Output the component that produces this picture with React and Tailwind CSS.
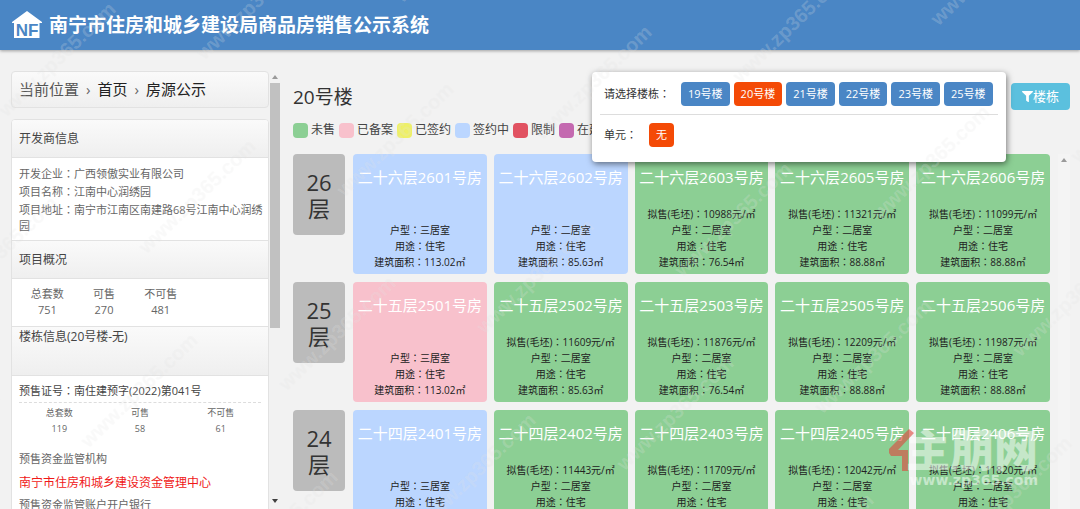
import React from "react";
import { FaFilter } from "react-icons/fa";

const LEGEND = [
  ["未售", "bg-[#8ccf94]"],
  ["已备案", "bg-[#f8c1cc]"],
  ["已签约", "bg-[#eef067]"],
  ["签约中", "bg-[#bbd6ff]"],
  ["限制", "bg-[#e15261]"],
  ["在建工程", "bg-[#c469b0]"],
];

const STATUS = {
  free: "bg-[#8ccf94]",
  signing: "bg-[#bbd6ff]",
  filed: "bg-[#f8c1cc]",
};

const FLOORS = [
  {
    floor: 26,
    name: "二十六层",
    rooms: [
      { no: "2601", status: "signing", type: "三居室", area: "113.02" },
      { no: "2602", status: "signing", type: "二居室", area: "85.63" },
      { no: "2603", status: "free", price: 10988, type: "二居室", area: "76.54" },
      { no: "2605", status: "free", price: 11321, type: "二居室", area: "88.88" },
      { no: "2606", status: "free", price: 11099, type: "二居室", area: "88.88" },
    ],
  },
  {
    floor: 25,
    name: "二十五层",
    rooms: [
      { no: "2501", status: "filed", type: "三居室", area: "113.02" },
      { no: "2502", status: "free", price: 11609, type: "二居室", area: "85.63" },
      { no: "2503", status: "free", price: 11876, type: "二居室", area: "76.54" },
      { no: "2505", status: "free", price: 12209, type: "二居室", area: "88.88" },
      { no: "2506", status: "free", price: 11987, type: "二居室", area: "88.88" },
    ],
  },
  {
    floor: 24,
    name: "二十四层",
    rooms: [
      { no: "2401", status: "signing", type: "三居室", area: "113.02" },
      { no: "2402", status: "free", price: 11443, type: "二居室", area: "85.63" },
      { no: "2403", status: "free", price: 11709, type: "二居室", area: "76.54" },
      { no: "2405", status: "free", price: 12042, type: "二居室", area: "88.88" },
      { no: "2406", status: "free", price: 11820, type: "二居室", area: "88.88" },
    ],
  },
];

const BUILDINGS = ["19号楼", "20号楼", "21号楼", "22号楼", "23号楼", "25号楼"];

// Full-width colon set in the middle of its cell.
function Colon() {
  return (
    <span lang="zh-TW" className="font-['Noto_Sans_CJK_TC',sans-serif] leading-none">：</span>
  );
}

function Logo() {
  return (
    <svg viewBox="0 0 32 28" className="h-7 w-8 shrink-0" role="img" aria-label="NF">
      <path d="M16 0 L31 11 V12 H28.500 V27 H3 V12 H1 V11 Z" fill="#fff" />
      <text x="16" y="24.500" textAnchor="middle" fontFamily="Liberation Sans, sans-serif" fontWeight="700" fontSize="17" fill="#4a86c5">
        NF
      </text>
    </svg>
  );
}

function Arrow({ down }) {
  return (
    <svg viewBox="0 0 6 4" className="h-1 w-1.5" aria-hidden="true">
      <path d={down ? "M0 0H6L3 4Z" : "M0 4H6L3 0Z"} fill={down ? "#404040" : "#9a9a9a"} />
    </svg>
  );
}

function PanelHead({ children }) {
  return (
    <h2 className="flex h-[38px] items-center border-b border-[#e2e2e2] bg-linear-to-b from-[#fafafa] to-[#efefef] px-[7px] text-xs text-[#444]">
      {children}
    </h2>
  );
}

function Stats({ values, className }) {
  return (
    <table className={`table-fixed text-center ${className}`}>
      <thead>
        <tr>
          {["总套数", "可售", "不可售"].map((t) => (
            <th key={t} className="p-0 font-normal">{t}</th>
          ))}
        </tr>
      </thead>
      <tbody>
        <tr>
          {values.map((v) => (
            <td key={v} className="p-0">{v}</td>
          ))}
        </tr>
      </tbody>
    </table>
  );
}

function Sidebar() {
  return (
    <aside className="flex w-[270px] shrink-0">
      <div className="min-w-0 flex-1 overflow-hidden text-[11px] text-[#666]">
        <nav className="flex h-[37px] items-center gap-[7px] rounded border border-[#e2e2e2] bg-linear-to-b from-[#fafafa] to-[#efefef] px-[7px] text-[15px]">
          <span className="text-[#555]">当前位置</span>
          <span>›</span>
          <a href="#home" className="text-[#222]">首页</a>
          <span>›</span>
          <a href="#listing" className="text-[#222]">房源公示</a>
        </nav>

        <section className="mt-[11px] overflow-hidden rounded-t border border-[#e2e2e2] bg-white">
          <PanelHead>开发商信息</PanelHead>
          <div className="flex flex-col gap-0.5 border-b border-[#e2e2e2] pt-2 pr-1 pb-1.5 pl-[7px] leading-4">
            <p>开发企业<Colon />广西领傲实业有限公司</p>
            <p>项目名称<Colon />江南中心润绣园</p>
            <p>项目地址<Colon />南宁市江南区南建路68号江南中心润绣园</p>
          </div>
          <PanelHead>项目概况</PanelHead>
          <div className="border-b border-[#e2e2e2] px-[7px] pt-[7px] pb-2">
            <Stats values={[751, 270, 481]} className="w-[170px] leading-4" />
          </div>
          <h2 className="h-[49px] border-b border-[#e2e2e2] bg-linear-to-b from-[#fafafa] to-[#efefef] px-[7px] text-xs leading-5 text-[#444]">
            楼栋信息(20号楼-无)
          </h2>
          <div className="px-[7px] pt-[7px]">
            <p className="border-b border-dashed border-[#ddd] pb-[3px] leading-4 text-[#444]">
              预售证号<Colon />南住建预字(2022)第041号
            </p>
            <Stats values={[119, 58, 61]} className="mt-0.5 w-full text-[9px] leading-4" />
            <p className="mt-[14px] leading-4">预售资金监管机构</p>
            <p className="mt-1 text-xs leading-6 text-[#f01818]">南宁市住房和城乡建设资金管理中心</p>
            <p className="mt-0.5 leading-4">预售资金监管账户开户银行</p>
          </div>
        </section>
      </div>
      <div className="flex w-3 flex-col items-center pt-1 pb-1.5" aria-hidden="true">
        <Arrow />
        <div className="mt-1 w-[10px] flex-1">
          <div className="h-[59%] bg-[#c1c1c1]" />
        </div>
        <Arrow down />
      </div>
    </aside>
  );
}

function Room({ level, room }) {
  return (
    <a
      href={`#room-${room.no}`}
      className={`flex h-[120px] min-w-0 flex-col items-center overflow-hidden rounded pt-[11px] pb-1 text-[10px] leading-4 whitespace-nowrap text-[#222] ${STATUS[room.status]}`}
    >
      <h3 className="mb-auto text-[15px] leading-6 text-white">{level}{room.no}号房</h3>
      {room.price && <p>拟售(毛坯)<Colon />{room.price}元/㎡</p>}
      <p>户型<Colon />{room.type}</p>
      <p>用途<Colon />住宅</p>
      <p>建筑面积<Colon />{room.area}㎡</p>
    </a>
  );
}

function BuildingMenu() {
  return (
    <div className="absolute top-px right-[64px] z-10 h-[90px] w-[414px] rounded bg-white px-2 pt-2.5 text-[11px] text-[#333] shadow-[1px_2px_6px_rgba(0,0,0,0.5)]">
      <div className="flex items-center gap-1 border-b border-[#ddd] pb-2 pl-1">
        <span className="mr-[7px]">请选择楼栋<Colon /></span>
        {BUILDINGS.map((b) => (
          <button
            key={b}
            type="button"
            className={`h-6 rounded px-[7px] text-white ${b === "20号楼" ? "bg-[#f44a06]" : "bg-[#4a86c5]"}`}
          >
            {b}
          </button>
        ))}
      </div>
      <div className="flex items-center gap-1 pt-2 pl-1">
        <span className="mr-2">单元<Colon /></span>
        <button type="button" className="h-6 rounded bg-[#f44a06] px-[7px] text-white">无</button>
      </div>
    </div>
  );
}

// Repeating diagonal site mark, laid on a skewed lattice over the page.
const MARKS = [];
for (let i = -3; i <= 6; i++) {
  for (let j = -2; j <= 6; j++) {
    const x = 57 + i * 198 + j * 140;
    const y = 59 - i * 57 + j * 137;
    if (x > -60 && x < 1140 && y > -60 && y < 570) MARKS.push([x, y]);
  }
}

function Watermarks() {
  return (
    <div className="pointer-events-none absolute inset-0 z-20 overflow-hidden" aria-hidden="true">
      {MARKS.map(([x, y]) => (
        <span
          key={`${x},${y}`}
          className="absolute -translate-x-1/2 -translate-y-1/2 -rotate-44 font-['Liberation_Sans',sans-serif] text-xl leading-6 font-bold text-white/20 [text-shadow:0_0_1px_rgba(0,0,0,0.03)]"
          style={{ left: x, top: y }}
        >
          www.zp365.com
        </span>
      ))}
      <div className="absolute right-[42px] bottom-[21px] flex flex-col items-end text-white/50">
        <div className="flex items-end">
          <svg viewBox="0 0 26 44" className="-mr-2 h-11 w-[26px]">
            <path d="M21 1 L26 5 L10 22 H20 V43 H14 V28 H3 L1 25 V21 Z" fill="#e0453c" fillOpacity="0.6" />
          </svg>
          <span className="text-[44px] leading-11 font-black">主朋网</span>
        </div>
        <span className="font-['DejaVu_Sans',sans-serif] text-sm leading-4 font-bold">www.zp365.com</span>
      </div>
    </div>
  );
}

export default function App() {
  return (
    <div className="relative flex h-screen flex-col overflow-hidden bg-[#f2f2f2] font-['Open_Sans','Noto_Sans_CJK_SC',sans-serif]" lang="zh-CN">
      <header className="flex h-[50px] shrink-0 items-center gap-1.5 bg-[#4a86c5] px-[11px] shadow-[0_1px_3px_rgba(0,0,0,0.35)]">
        <Logo />
        <h1 className="text-[19px] font-bold text-white">南宁市住房和城乡建设局商品房销售公示系统</h1>
      </header>

      <div className="flex min-h-0 flex-1 gap-3 pt-[21px] pr-2.5 pl-[11px]">
        <Sidebar />
        <main className="flex min-w-0 flex-1 flex-col">
          <div className="relative flex h-[51px] shrink-0 items-center justify-between">
            <h2 className="text-[19px] leading-6 text-[#333]">20号楼</h2>
            <button type="button" className="flex h-[27px] items-center rounded bg-[#5bc0de] px-[11px] text-[13px] text-white">
              <FaFilter className="size-[11px]" />
              楼栋
            </button>
            <BuildingMenu />
          </div>
          <ul className="flex h-4 shrink-0 items-center gap-1 text-xs whitespace-nowrap text-[#444]">
            {LEGEND.map(([label, color]) => (
              <li key={label} className="flex items-center gap-[3px]">
                <span className={`size-[15px] rounded-sm ${color}`} />
                {label}
              </li>
            ))}
          </ul>
          <div className="mt-4 flex min-h-0 flex-1 overflow-hidden">
            <div className="flex min-w-0 flex-1 flex-col gap-2">
              {FLOORS.map((f) => (
                <section key={f.floor} className="flex items-start gap-2">
                  <div className="flex h-[81px] w-[52px] shrink-0 flex-col items-center justify-center rounded bg-[#bbb] text-[22px] leading-[26px] text-[#333]">
                    <span>{f.floor}</span>
                    <span>层</span>
                  </div>
                  <div className="grid flex-1 grid-cols-5 gap-[7px]">
                    {f.rooms.map((r) => (
                      <Room key={r.no} level={f.name} room={r} />
                    ))}
                  </div>
                </section>
              ))}
            </div>
            <div className="ml-2 flex w-3 flex-col items-center bg-[#f4f4f4] pt-1" aria-hidden="true">
              <Arrow />
            </div>
          </div>
        </main>
      </div>
      <Watermarks />
    </div>
  );
}
